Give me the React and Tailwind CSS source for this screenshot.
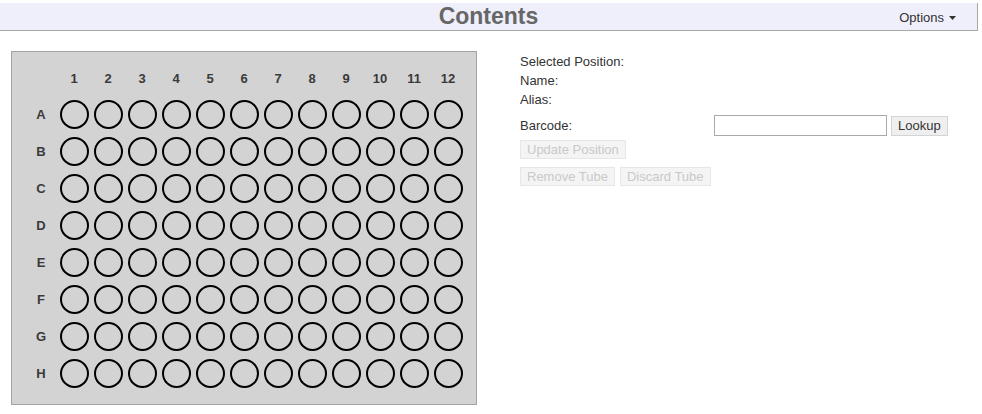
import React from "react";

const cols = [1, 2, 3, 4, 5, 6, 7, 8, 9, 10, 11, 12];
const rows = ["A", "B", "C", "D", "E", "F", "G", "H"];

function Plate() {
  return (
    <div className="ml-[11px] mt-[20px] w-[466px] h-[354px] bg-[#d3d3d3] border border-[#a3a3a3] pt-[10px] pl-[13px]">
      <div className="flex h-[34px] items-center">
        <div className="w-[32px]" />
        {cols.map((c) => (
          <div key={c} className="w-[34px] text-center text-[13px] font-bold text-[#3a3a3a]">
            {c}
          </div>
        ))}
      </div>
      {rows.map((r) => (
        <div key={r} className="flex h-[37px] items-center">
          <div className="w-[32px] text-center text-[13px] font-bold text-[#3a3a3a]">{r}</div>
          {cols.map((c) => (
            <div key={c} className="w-[34px] flex justify-center">
              <div className="w-[29px] h-[29px] rounded-full border-2 border-black" />
            </div>
          ))}
        </div>
      ))}
    </div>
  );
}

function Details() {
  return (
    <div className="ml-[43px] mt-[21px] w-[430px] text-[13px] text-[#333] leading-[19px]">
      <div>Selected Position:</div>
      <div>Name:</div>
      <div>Alias:</div>
      <div className="flex items-center mt-[6px]">
        <div className="w-[194px]">Barcode:</div>
        <input
          type="text"
          className="w-[173px] h-[21px] border border-[#a9a9a9] bg-white px-1 outline-none"
        />
        <button className="ml-[4px] h-[20px] px-[6px] bg-[#efefef] border border-[#d4d4d4] text-[#333] leading-[18px]">
          Lookup
        </button>
      </div>
      <div className="mt-[4px]">
        <button
          disabled
          className="h-[19px] px-[6px] bg-[#f4f4f4] border border-[#e6e6e6] text-[#c9c9c9] leading-[17px]"
        >
          Update Position
        </button>
      </div>
      <div className="mt-[8px] flex gap-[5px]">
        <button
          disabled
          className="h-[19px] px-[6px] bg-[#f4f4f4] border border-[#e6e6e6] text-[#c9c9c9] leading-[17px]"
        >
          Remove Tube
        </button>
        <button
          disabled
          className="h-[19px] px-[6px] bg-[#f4f4f4] border border-[#e6e6e6] text-[#c9c9c9] leading-[17px]"
        >
          Discard Tube
        </button>
      </div>
    </div>
  );
}

export default function App() {
  return (
    <div className="w-[982px] h-[414px] bg-white font-['Liberation_Sans',Arial,sans-serif]">
      <div className="pt-[3px]">
        <div className="relative w-[978px] h-[28px] bg-[#efeffb] border-b border-r border-[#a8a8a8] flex items-center justify-center">
          <h1 className="text-[23px] font-bold text-[#666] leading-none">Contents</h1>
          <div className="absolute right-[21px] top-[1px] h-full flex items-center text-[13px] text-[#333]">
            Options
            <svg width="7" height="4" viewBox="0 0 7 4" className="ml-[5px]">
              <path d="M0 0 L7 0 L3.5 4 Z" fill="#333" />
            </svg>
          </div>
        </div>
      </div>
      <div className="flex">
        <Plate />
        <Details />
      </div>
    </div>
  );
}
